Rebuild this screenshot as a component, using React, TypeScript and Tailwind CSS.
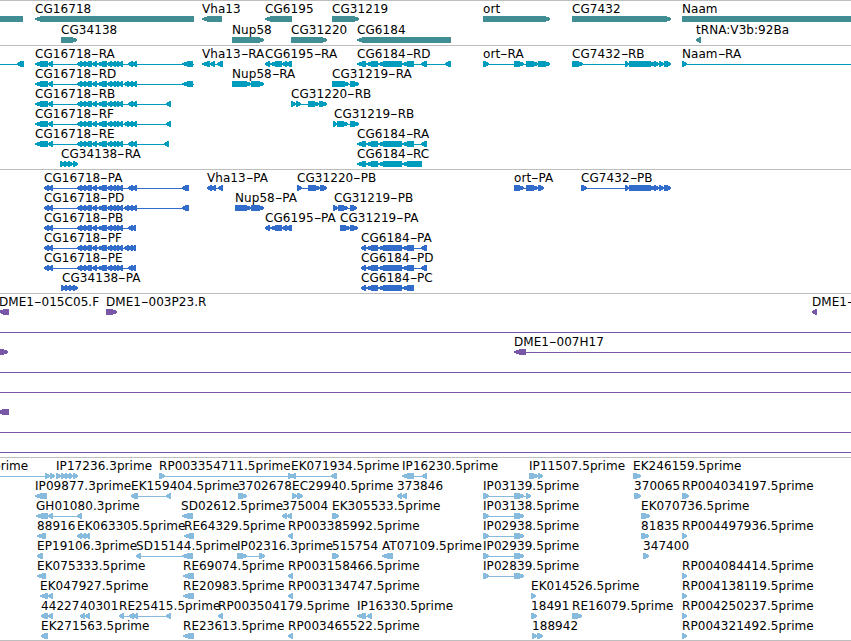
type Exon = [number, number];
type Strand = '+' | '-';

interface Feature {
  name: string;
  strand: Strand;
  exons: Exon[];
  /** Label start, when it differs from the first exon. */
  labelX?: number;
  /** Intron line, when it runs past the exons. */
  span?: Exon;
}

interface TrackData {
  id: string;
  color: string;
  rows: Feature[][];
}

const VIEW_WIDTH = 851;

const fwd = (name: string, exons: Exon[], extra: Partial<Feature> = {}): Feature => ({
  name,
  strand: '+',
  exons,
  ...extra,
});

const rev = (name: string, exons: Exon[], extra: Partial<Feature> = {}): Feature => ({
  name,
  strand: '-',
  exons,
  ...extra,
});

const spanOnly = (): Feature => rev('', [], { span: [0, VIEW_WIDTH] });

// Exons shared between transcripts of the same gene
const CG16718_UTR: Exon[] = [[35, 48], [48, 53]];
const CG16718_CDS: Exon[] = [[44, 48], [48, 53]];
const CG16718_MID: Exon[] = [[77, 81], [81, 85], [85, 92], [92, 97], [97, 107], [107, 111], [111, 115], [115, 118], [118, 122]];
const CG6184_MID: Exon[] = [[366, 378], [378, 402], [402, 414]];
const CG7432_END: Exon[] = [[626, 629], [629, 655], [655, 659], [659, 664], [664, 671]];
const CG6195: Exon[] = [[265, 270], [270, 282], [282, 286], [286, 292]];
const IP_ORT: Exon[] = [[483, 489], [514, 519], [516, 524]];

const GENES: Feature[][] = [
  [
    rev('', [[-20, 23]]),
    rev('CG16718', [[35, 194]]),
    rev('Vha13', [[202, 222]]),
    rev('CG6195', [[265, 292]]),
    fwd('CG31219', [[332, 359]]),
    fwd('ort', [[483, 550]]),
    fwd('CG7432', [[572, 671]]),
    fwd('Naam', [[682, 880]]),
  ],
  [
    fwd('CG34138', [[61, 77]]),
    fwd('Nup58', [[232, 264]]),
    fwd('CG31220', [[291, 327]]),
    rev('CG6184', [[357, 451]]),
    rev('tRNA:V3b:92Ba', [[696, 701]]),
  ],
];

const TRANSCRIPTS: Feature[][] = [
  [
    rev('', [[17, 24]], { span: [0, 24] }),
    rev('CG16718-RA', [...CG16718_UTR, ...CG16718_MID, [128, 132], [132, 137], [182, 193]], { span: [35, 194] }),
    rev('Vha13-RA', [[202, 210], [210, 215], [217, 223]]),
    rev('CG6195-RA', CG6195),
    rev('CG6184-RD', [[357, 366], ...CG6184_MID, [421, 427], [445, 451]]),
    fwd('ort-RA', [[483, 489], [514, 524], [526, 538], [538, 550]]),
    fwd('CG7432-RB', [[572, 583], ...CG7432_END]),
    fwd('Naam-RA', [[682, 687]], { span: [682, VIEW_WIDTH] }),
  ],
  [
    rev('CG16718-RD', [...CG16718_UTR, ...CG16718_MID, [124, 128], [128, 132], [132, 137], [182, 193]], { span: [35, 194] }),
    fwd('Nup58-RA', [[232, 251], [251, 264]]),
    fwd('CG31219-RA', [[332, 349], [350, 359]]),
  ],
  [
    rev('CG16718-RB', [...CG16718_UTR, ...CG16718_MID, [128, 132], [132, 137], [166, 171]]),
    fwd('CG31220-RB', [[291, 296], [296, 301], [308, 319], [319, 327]]),
  ],
  [
    rev('CG16718-RF', [...CG16718_UTR, ...CG16718_MID, [124, 128], [128, 132], [132, 137], [166, 171]]),
    fwd('CG31219-RB', [[334, 337], [337, 348], [350, 359]]),
  ],
  [
    rev('CG16718-RE', [...CG16718_UTR, ...CG16718_MID, [128, 132], [132, 137], [164, 169]]),
    rev('CG6184-RA', [[357, 366], ...CG6184_MID, [421, 427]]),
  ],
  [
    fwd('CG34138-RA', [[61, 65], [65, 69], [69, 73], [73, 78]]),
    rev('CG6184-RC', [[357, 366], [366, 378], [378, 402], [402, 422]]),
  ],
];

const PROTEINS: Feature[][] = [
  [
    rev('CG16718-PA', [...CG16718_CDS, ...CG16718_MID, [128, 132], [132, 137], [182, 189]]),
    rev('Vha13-PA', [[207, 211], [211, 215], [218, 223]]),
    fwd('CG31220-PB', [[297, 302], [308, 320], [320, 327]]),
    fwd('ort-PA', [[514, 524], [526, 538], [538, 544]]),
    fwd('CG7432-PB', [[581, 587], ...CG7432_END]),
  ],
  [
    rev('CG16718-PD', [...CG16718_CDS, ...CG16718_MID, [124, 128], [128, 132], [132, 137], [182, 189]]),
    fwd('Nup58-PA', [[235, 251], [251, 264]]),
    fwd('CG31219-PB', [[334, 338], [338, 348], [350, 357]]),
  ],
  [
    rev('CG16718-PB', [...CG16718_CDS, ...CG16718_MID, [128, 132], [131, 135]]),
    rev('CG6195-PA', CG6195),
    fwd('CG31219-PA', [[340, 350], [350, 358]]),
  ],
  [
    rev('CG16718-PF', [...CG16718_CDS, ...CG16718_MID, [124, 128], [128, 132], [131, 135]]),
    rev('CG6184-PA', [[361, 366], ...CG6184_MID, [421, 427]]),
  ],
  [
    rev('CG16718-PE', [...CG16718_CDS, ...CG16718_MID, [128, 132], [131, 135]]),
    rev('CG6184-PD', [[361, 366], ...CG6184_MID, [421, 427]]),
  ],
  [
    fwd('CG34138-PA', [[62, 66], [66, 70], [70, 74], [74, 78]]),
    rev('CG6184-PC', [[361, 366], ...CG6184_MID]),
  ],
];

const BAC_ENDS: Feature[][] = [
  [
    rev('DME1-015C05.F', [[-1, 9]]),
    fwd('DME1-003P23.R', [[106, 117]]),
    rev('DME1-', [[812, 817]]),
  ],
  [spanOnly()],
  [fwd('', [[-8, 8]]), rev('DME1-007H17', [[514, 526]], { span: [514, VIEW_WIDTH] })],
  [spanOnly()],
  [spanOnly()],
  [rev('', [[-3, 9]])],
  [spanOnly()],
  [spanOnly()],
];

const ESTS: Feature[][] = [
  [
    fwd('prime', [[45, 50], [50, 55]], { labelX: -7, span: [0, 55] }),
    fwd('IP17236.3prime', [[56, 61], [61, 66], [66, 70], [70, 73], [73, 78]]),
    fwd('RP003354711.5prime', [[159, 165], [288, 293]]),
    rev('EK071934.5prime', [[291, 296], [331, 337]]),
    rev('IP16230.5prime', [[402, 414], [422, 427]]),
    fwd('IP11507.5prime', [[529, 538], [538, 543]]),
    fwd('EK246159.5prime', [[633, 641]]),
  ],
  [
    rev('IP09877.3prime', [[35, 47]]),
    rev('EK159404.5prime', [[131, 138], [166, 171]]),
    fwd('3702678', [[238, 247]]),
    fwd('EC29940.5prime', [[292, 297], [297, 303]]),
    rev('373846', [[397, 402], [402, 407]]),
    fwd('IP03139.5prime', [...IP_ORT, [526, 531]]),
    fwd('370065', [[634, 641]]),
    fwd('RP004034197.5prime', [[682, 689]]),
  ],
  [
    rev('GH01080.3prime', [[36, 48], [48, 53], [77, 82]]),
    rev('SD02612.5prime', [[182, 193]], { labelX: 181 }),
    rev('375004', [[282, 287], [287, 292]]),
    fwd('EK305533.5prime', [[332, 339]]),
    fwd('IP03138.5prime', IP_ORT),
    fwd('EK070736.5prime', [[641, 650]]),
  ],
  [
    rev('88916', [[37, 46]]),
    rev('EK063305.5prime', [[77, 81], [81, 85], [85, 89]]),
    rev('RE64329.5prime', [[184, 194]]),
    rev('RP003385992.5prime', [[288, 293]]),
    fwd('IP02938.5prime', IP_ORT),
    fwd('81835', [[641, 649]]),
    fwd('RP004497936.5prime', [[682, 687]]),
  ],
  [
    rev('EP19106.3prime', [[37, 43]]),
    rev('SD15144.5prime', [[136, 141], [182, 193]]),
    fwd('IP02316.3prime', [[237, 247], [259, 265]]),
    fwd('515754', [[332, 339]]),
    rev('AT07109.5prime', [[382, 393]]),
    fwd('IP02939.5prime', IP_ORT),
    fwd('347400', [[643, 649]]),
  ],
  [
    rev('EK075333.5prime', [[37, 46]]),
    rev('RE69074.5prime', [[183, 194]]),
    rev('RP003158466.5prime', [[288, 293]]),
    fwd('IP02839.5prime', IP_ORT),
    fwd('RP004084414.5prime', [[682, 687]]),
  ],
  [
    rev('EK047927.5prime', [[40, 48], [48, 53]]),
    rev('RE20983.5prime', [[183, 194]]),
    rev('RP003134747.5prime', [[288, 293]]),
    fwd('EK014526.5prime', [[531, 536]]),
    fwd('RP004138119.5prime', [[682, 687]]),
  ],
  [
    rev('44227', [[41, 48], [48, 53]]),
    rev('40301', [[80, 85], [85, 89]]),
    rev('RE25415.5prime', [[119, 124], [129, 133], [133, 137], [166, 171]]),
    rev('RP003504179.5prime', [[218, 223]]),
    rev('IP16330.5prime', [[357, 366], [367, 372]]),
    fwd('18491', [[531, 537]]),
    fwd('RE16079.5prime', [[572, 582]]),
    fwd('RP004250237.5prime', [[682, 687]]),
  ],
  [
    rev('EK271563.5prime', [[41, 48]]),
    rev('RE23613.5prime', [[183, 194]]),
    rev('RP003465522.5prime', [[288, 293]]),
    fwd('188942', [[532, 537], [537, 543]]),
    fwd('RP004321492.5prime', [[682, 687]]),
  ],
];

const TRACKS: TrackData[] = [
  { id: 'genes', color: 'text-[#408e94]', rows: GENES },
  { id: 'transcripts', color: 'text-[#009cbe]', rows: TRANSCRIPTS },
  { id: 'proteins', color: 'text-[#316ccb]', rows: PROTEINS },
  { id: 'bac-ends', color: 'text-[#7858a6]', rows: BAC_ENDS },
  { id: 'ests', color: 'text-[#86bbdd]', rows: ESTS },
];

/** Box with a blunt point on the side the strand runs to. */
function exonPoints([start, end]: Exon, strand: Strand) {
  const width = end - start;
  const head = Math.min(width > 7 ? 6 : 4, width);
  // very short exons get a longer tail so that neighbours touch
  const tail = width < 5 ? 1 : 0;
  if (strand === '+') {
    return `${start - tail},0 ${end - head},0 ${end},2 ${end},4 ${end - head},6 ${start - tail},6`;
  }
  return `${end + tail},0 ${start + head},0 ${start},2 ${start},4 ${start + head},6 ${end + tail},6`;
}

function Glyph({ feature }: { feature: Feature }) {
  const { exons, strand } = feature;
  const [from, to] = feature.span ?? [exons[0][0], exons[exons.length - 1][1]];
  return (
    <g>
      <rect x={from} y={3} width={to - from} height={1} />
      {exons.map((exon) => (
        <polygon key={exon[0]} points={exonPoints(exon, strand)} />
      ))}
    </g>
  );
}

/** Feature name; the hyphen before the isoform is set wide. */
function Label({ feature }: { feature: Feature }) {
  const [base, suffix] = feature.name.split('-');
  return (
    <span
      className="absolute top-0 whitespace-pre text-black"
      style={{ left: feature.labelX ?? feature.exons[0][0] }}
    >
      {base}
      {suffix !== undefined && (
        <>
          <span className="mr-[3px] inline-block origin-left scale-x-[1.75]">-</span>
          {suffix}
        </>
      )}
    </span>
  );
}

function Row({ features }: { features: Feature[] }) {
  return (
    <div className="relative flex h-5 shrink-0 flex-col justify-end">
      {features.filter((f) => f.name).map((f) => (
        <Label key={f.name} feature={f} />
      ))}
      <svg width={VIEW_WIDTH} height={6} fill="currentColor" shapeRendering="crispEdges" aria-hidden>
        {features.map((f, i) => (
          <Glyph key={i} feature={f} />
        ))}
      </svg>
    </div>
  );
}

function Track({ track }: { track: TrackData }) {
  const gap = track.id === 'genes' ? 'gap-px' : '';
  return (
    <section className={`flex flex-col border-t border-[#bebebe] pt-px ${track.id === 'ests' ? 'pb-px' : 'pb-0.5'} ${gap} ${track.color}`}>
      {track.rows.map((features, i) => (
        <Row key={i} features={features} />
      ))}
    </section>
  );
}

export default function App() {
  return (
    <main className="h-[641px] w-[851px] overflow-hidden border-b border-[#bebebe] bg-white font-['DejaVu_Sans',sans-serif] text-[12px] leading-[14px] tracking-[0.06px]">
      {TRACKS.map((track) => (
        <Track key={track.id} track={track} />
      ))}
    </main>
  );
}
